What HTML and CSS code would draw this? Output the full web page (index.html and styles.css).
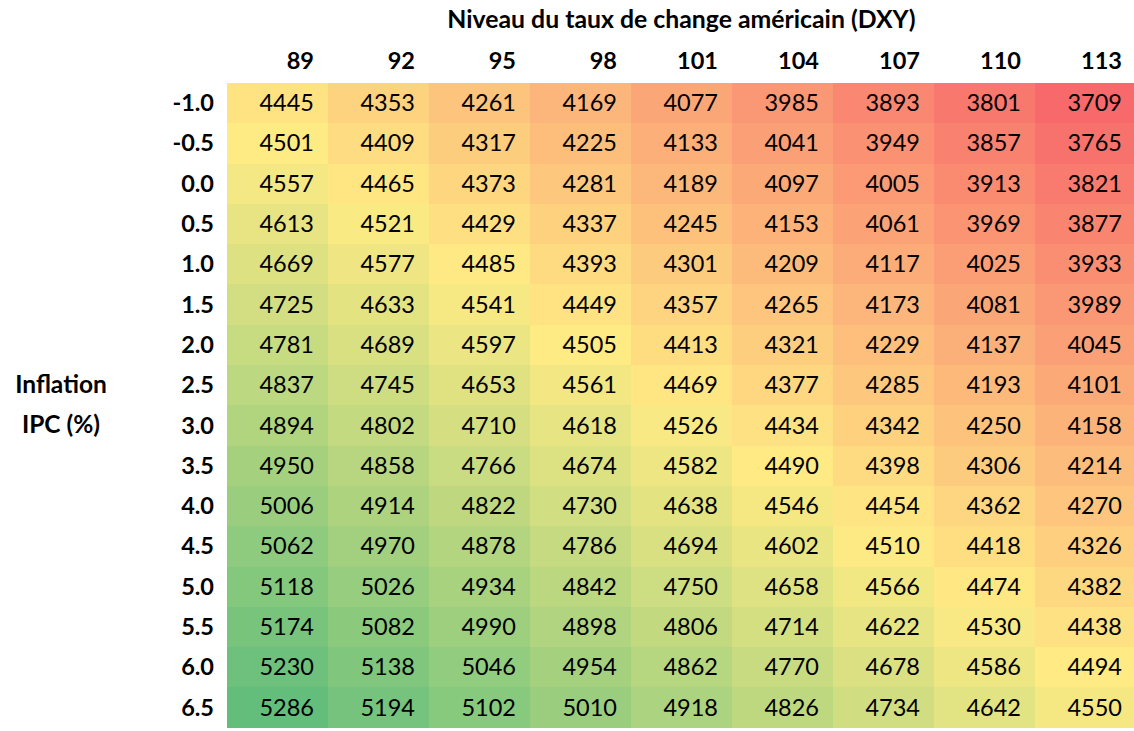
FILE: index.html
```html
<!DOCTYPE html>
<html lang="fr">
<head>
<meta charset="utf-8">
<title>Sensibilité</title>
<link rel="stylesheet" href="styles.css">
</head>
<body>
<div class="sheet" id="sheet">
  <div class="title">Niveau du taux de change américain (DXY)</div>
  <div class="axis-label">
    <div class="axis-line">Inflation</div>
    <div class="axis-line">IPC (%)</div>
  </div>
</div>
<script src="app.js"></script>
</body>
</html>
```
FILE: styles.css
```css
html, body {
  margin: 0;
  padding: 0;
  background: #ffffff;
  overflow: hidden;
}
body {
  font-family: "Lato", "Liberation Sans", sans-serif;
  color: #000000;
  width: 1134px;
  height: 731px;
}
.sheet {
  display: grid;
  grid-template-columns: 122px 105px repeat(9, 101px);
  grid-template-rows: 38px 45px repeat(16, 40.3px);
  width: 1136px;
}
.title {
  grid-column: 3 / 12;
  grid-row: 1;
  display: flex;
  align-items: center;
  justify-content: center;
  font-weight: 700;
  font-size: 24.8px;
  padding-bottom: 1px;
}
.col-head {
  grid-row: 2;
  display: flex;
  align-items: center;
  justify-content: flex-end;
  padding-right: 14px;
  padding-bottom: 2px;
  font-weight: 700;
  font-size: 23.5px;
}
.row-head {
  grid-column: 2;
  display: flex;
  align-items: center;
  justify-content: flex-end;
  padding-right: 13px;
  padding-bottom: 2px;
  font-weight: 700;
  font-size: 23.5px;
}
.cell {
  display: flex;
  align-items: center;
  justify-content: flex-end;
  padding-right: 14px;
  padding-bottom: 2px;
  font-size: 23.5px;
}
.axis-label {
  grid-column: 1;
  grid-row: 10 / 12;
  display: flex;
  flex-direction: column;
  font-weight: 700;
  font-size: 24.5px;
}
.axis-line {
  flex: 1;
  display: flex;
  align-items: center;
  justify-content: center;
  padding-bottom: 4px;
}
```
FILE: app.js
```js
(function () {
  var sheet = document.getElementById('sheet');
  var cols = [89, 92, 95, 98, 101, 104, 107, 110, 113];
  var rows = ['-1.0','-0.5','0.0','0.5','1.0','1.5','2.0','2.5','3.0','3.5','4.0','4.5','5.0','5.5','6.0','6.5'];
  var base = [4445,4501,4557,4613,4669,4725,4781,4837,4894,4950,5006,5062,5118,5174,5230,5286];
  var all = [];
  var r, c;
  for (r = 0; r < rows.length; r++) {
    for (c = 0; c < cols.length; c++) {
      all.push(base[r] - 92 * c);
    }
  }
  var sorted = all.slice().sort(function (a, b) { return a - b; });
  var min = sorted[0];
  var max = sorted[sorted.length - 1];
  var n = sorted.length;
  var pos = (n - 1) * 0.5;
  var lo = Math.floor(pos);
  var mid = sorted[lo] + (sorted[Math.min(lo + 1, n - 1)] - sorted[lo]) * (pos - lo);
  var red = [248, 105, 107], yel = [255, 235, 132], grn = [99, 190, 123];
  function mix(a, b, t) {
    return 'rgb(' + Math.round(a[0] + (b[0] - a[0]) * t) + ',' +
      Math.round(a[1] + (b[1] - a[1]) * t) + ',' +
      Math.round(a[2] + (b[2] - a[2]) * t) + ')';
  }
  function color(v) {
    if (v <= mid) return mix(red, yel, (v - min) / (mid - min));
    return mix(yel, grn, (v - mid) / (max - mid));
  }
  function add(cls, text, col, row, bg) {
    var d = document.createElement('div');
    d.className = cls;
    d.textContent = text;
    d.style.gridColumn = col;
    d.style.gridRow = row;
    if (bg) d.style.background = bg;
    sheet.appendChild(d);
  }
  for (c = 0; c < cols.length; c++) add('col-head', cols[c], c + 3, 2);
  for (r = 0; r < rows.length; r++) {
    add('row-head', rows[r], 2, r + 3);
    for (c = 0; c < cols.length; c++) {
      var v = base[r] - 92 * c;
      add('cell', v, c + 3, r + 3, color(v));
    }
  }
})();
```
